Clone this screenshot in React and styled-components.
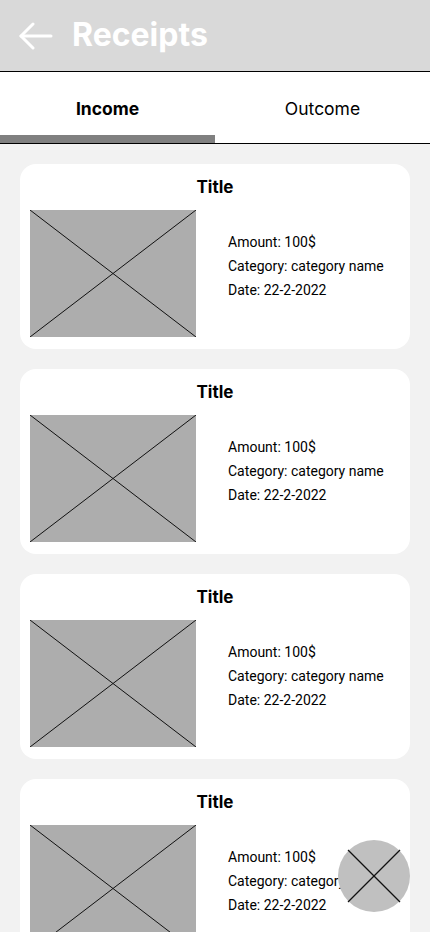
import React from "react";
import styled, { createGlobalStyle } from "styled-components";

const Global = createGlobalStyle`
  html, body { margin: 0; padding: 0; background: #f2f2f2; }
  body { font-family: Inter, "Noto Sans", sans-serif; overflow: hidden; }
  * { box-sizing: border-box; }
`;

const Page = styled.div`
  width: 430px;
  height: 932px;
  overflow: hidden;
  position: relative;
  background: #f2f2f2;
`;

const Header = styled.header`
  height: 72px;
  background: #d9d9d9;
  border-bottom: 1px solid #000;
  display: flex;
  align-items: center;
  padding-left: 19px;
  gap: 19px;
`;

const HeaderTitle = styled.h1`
  margin: 0;
  font-family: Inter, sans-serif;
  font-weight: 700;
  font-size: 32px;
  color: #fff;
  line-height: 1;
  padding-bottom: 1px;
`;

const Tabs = styled.nav`
  height: 72px;
  background: #fff;
  border-bottom: 1px solid #000;
  display: grid;
  grid-template-columns: 215px 1fr;
`;

const Tab = styled.div`
  display: flex;
  align-items: center;
  justify-content: center;
  padding-top: 10px;
  font-family: Inter, sans-serif;
  font-size: 17.5px;
  font-weight: ${(p) => (p.$active ? 700 : 400)};
  color: #000;
  border-bottom: 8px solid ${(p) => (p.$active ? "#808080" : "transparent")};
`;

const List = styled.main`
  display: flex;
  flex-direction: column;
  gap: 20px;
  padding: 20px 20px 0;
`;

const Card = styled.section`
  flex-shrink: 0;
  height: 185px;
  background: #fff;
  border-radius: 16px;
  padding: 11px 10px 12px;
  display: flex;
  flex-direction: column;
`;

const CardTitle = styled.h2`
  margin: 0;
  height: 24px;
  line-height: 24px;
  text-align: center;
  font-family: Inter, sans-serif;
  font-weight: 700;
  font-size: 17px;
  color: #000;
`;

const CardBody = styled.div`
  margin-top: 11px;
  display: flex;
  gap: 32px;
`;

const Placeholder = styled.svg`
  display: block;
  width: 166px;
  height: 127px;
  flex-shrink: 0;
`;

const Details = styled.div`
  padding-top: 20px;
  display: flex;
  flex-direction: column;
  white-space: nowrap;
`;

const Line = styled.div`
  font-family: Roboto, sans-serif;
  font-size: 14px;
  line-height: 24px;
  color: #000;
`;

const Fab = styled.button`
  position: absolute;
  left: 338px;
  top: 840px;
  width: 72px;
  height: 72px;
  border-radius: 50%;
  border: none;
  padding: 0;
  background: #c0c0c0;
  display: block;
`;

const ImageBox = () => (
  <Placeholder viewBox="0 0 166 127" preserveAspectRatio="none">
    <rect width="166" height="127" fill="#adadad" />
    <line x1="0" y1="0" x2="166" y2="127" stroke="#111" strokeWidth="1" />
    <line x1="166" y1="0" x2="0" y2="127" stroke="#111" strokeWidth="1" />
  </Placeholder>
);

const Receipt = () => (
  <Card>
    <CardTitle>Title</CardTitle>
    <CardBody>
      <ImageBox />
      <Details>
        <Line>Amount: 100$</Line>
        <Line>Category: category name</Line>
        <Line>Date: 22-2-2022</Line>
      </Details>
    </CardBody>
  </Card>
);

export default function App() {
  return (
    <Page>
      <Global />
      <Header>
        <svg width="34" height="28" viewBox="0 0 34 28" fill="none" stroke="#fff" strokeWidth="3" strokeLinecap="round" strokeLinejoin="round">
          <line x1="2" y1="14" x2="32" y2="14" />
          <polyline points="14,2 2,14 14,26" />
        </svg>
        <HeaderTitle>Receipts</HeaderTitle>
      </Header>
      <Tabs>
        <Tab $active>Income</Tab>
        <Tab>Outcome</Tab>
      </Tabs>
      <List>
        <Receipt />
        <Receipt />
        <Receipt />
        <Receipt />
      </List>
      <Fab aria-label="Add">
        <svg width="72" height="72" viewBox="0 0 72 72">
          <line x1="10" y1="10" x2="62" y2="62" stroke="#111" strokeWidth="1.3" />
          <line x1="62" y1="10" x2="10" y2="62" stroke="#111" strokeWidth="1.3" />
        </svg>
      </Fab>
    </Page>
  );
}
